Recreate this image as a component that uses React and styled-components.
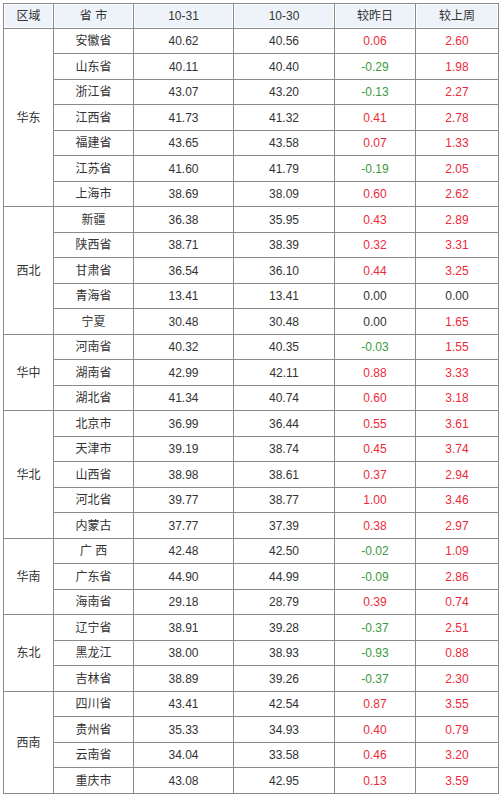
import React from 'react'
import styled, { createGlobalStyle } from 'styled-components'

const GlobalStyle = createGlobalStyle`
body {
    margin: 0;
    background: #fff;
    font-family: "Liberation Sans", Arial, "Noto Sans CJK SC", sans-serif;
}
`

const Wrapper = styled.div`
padding: 3px 0 0 3px;
`

const Table = styled.table`
border-collapse: collapse;
table-layout: fixed;
width: 495px;
font-size: 12px;
color: #333;
border: 1px solid #8a8a8a;
`

const Th = styled.th`
height: 24px;
padding: 0;
font-weight: 400;
background: #eef3fa;
box-shadow: inset 0 0 0 1px #fff;
border: 1px solid #8a8a8a;
text-align: center;
line-height: 14px;
`

const Row = styled.tr`
height: ${({ $tall }) => ($tall ? '26px' : '25px')};
`

const Td = styled.td`
padding: 0;
border: 1px solid #8a8a8a;
text-align: center;
line-height: 14px;
color: ${({ $tone }) => ($tone === 'up' ? '#ec2a3a' : $tone === 'down' ? '#3c9a3c' : '#333')};
`

const data = [
    ['华东', [
        ['安徽省', '40.62', '40.56', '0.06', '2.60'],
        ['山东省', '40.11', '40.40', '-0.29', '1.98'],
        ['浙江省', '43.07', '43.20', '-0.13', '2.27'],
        ['江西省', '41.73', '41.32', '0.41', '2.78'],
        ['福建省', '43.65', '43.58', '0.07', '1.33'],
        ['江苏省', '41.60', '41.79', '-0.19', '2.05'],
        ['上海市', '38.69', '38.09', '0.60', '2.62'],
    ]],
    ['西北', [
        ['新疆', '36.38', '35.95', '0.43', '2.89'],
        ['陕西省', '38.71', '38.39', '0.32', '3.31'],
        ['甘肃省', '36.54', '36.10', '0.44', '3.25'],
        ['青海省', '13.41', '13.41', '0.00', '0.00'],
        ['宁夏', '30.48', '30.48', '0.00', '1.65'],
    ]],
    ['华中', [
        ['河南省', '40.32', '40.35', '-0.03', '1.55'],
        ['湖南省', '42.99', '42.11', '0.88', '3.33'],
        ['湖北省', '41.34', '40.74', '0.60', '3.18'],
    ]],
    ['华北', [
        ['北京市', '36.99', '36.44', '0.55', '3.61'],
        ['天津市', '39.19', '38.74', '0.45', '3.74'],
        ['山西省', '38.98', '38.61', '0.37', '2.94'],
        ['河北省', '39.77', '38.77', '1.00', '3.46'],
        ['内蒙古', '37.77', '37.39', '0.38', '2.97'],
    ]],
    ['华南', [
        ['广 西', '42.48', '42.50', '-0.02', '1.09'],
        ['广东省', '44.90', '44.99', '-0.09', '2.86'],
        ['海南省', '29.18', '28.79', '0.39', '0.74'],
    ]],
    ['东北', [
        ['辽宁省', '38.91', '39.28', '-0.37', '2.51'],
        ['黑龙江', '38.00', '38.93', '-0.93', '0.88'],
        ['吉林省', '38.89', '39.26', '-0.37', '2.30'],
    ]],
    ['西南', [
        ['四川省', '43.41', '42.54', '0.87', '3.55'],
        ['贵州省', '35.33', '34.93', '0.40', '0.79'],
        ['云南省', '34.04', '33.58', '0.46', '3.20'],
        ['重庆市', '43.08', '42.95', '0.13', '3.59'],
    ]],
]

const tone = (v) => {
    const n = parseFloat(v)
    if (n > 0) return 'up'
    if (n < 0) return 'down'
    return 'flat'
}

const App = () => {
    let idx = 0
    return (
        <Wrapper>
            <GlobalStyle />
            <Table>
                <colgroup>
                    <col style={{ width: 50 }} />
                    <col style={{ width: 80 }} />
                    <col style={{ width: 100 }} />
                    <col style={{ width: 101 }} />
                    <col style={{ width: 81 }} />
                    <col style={{ width: 83 }} />
                </colgroup>
                <thead>
                    <tr>
                        <Th>区域</Th>
                        <Th>省 市</Th>
                        <Th>10-31</Th>
                        <Th>10-30</Th>
                        <Th>较昨日</Th>
                        <Th>较上周</Th>
                    </tr>
                </thead>
                <tbody>
                    {data.map(([region, rows]) =>
                        rows.map((r, i) => {
                            idx += 1
                            return (
                                <Row key={region + r[0]} $tall={idx % 2 === 0}>
                                    {i === 0 && <Td rowSpan={rows.length}>{region}</Td>}
                                    <Td>{r[0]}</Td>
                                    <Td>{r[1]}</Td>
                                    <Td>{r[2]}</Td>
                                    <Td $tone={tone(r[3])}>{r[3]}</Td>
                                    <Td $tone={tone(r[4])}>{r[4]}</Td>
                                </Row>
                            )
                        })
                    )}
                </tbody>
            </Table>
        </Wrapper>
    )
}

export default App
